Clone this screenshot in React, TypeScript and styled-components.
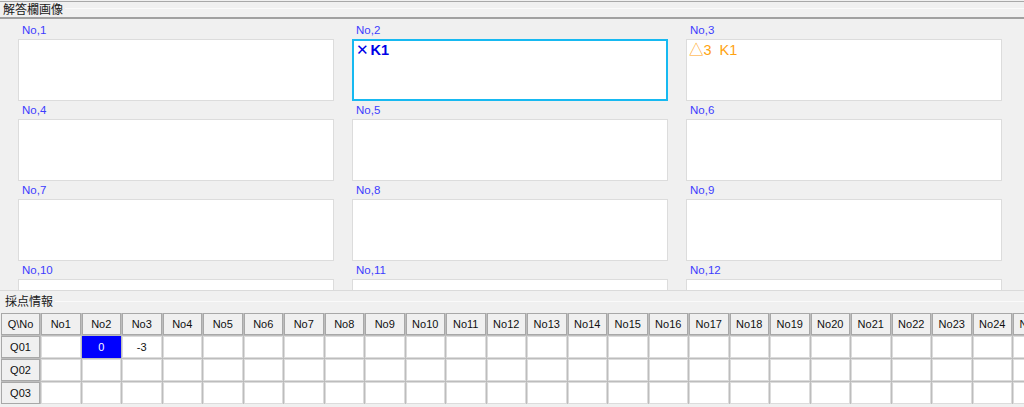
import { createGlobalStyle } from "styled-components";
import styled from "styled-components";

const GlobalStyle = createGlobalStyle`
  html, body {
    margin: 0;
    padding: 0;
    background: #f0f0f0;
    overflow: hidden;
  }
  * {
    box-sizing: border-box;
  }
`;

const Window = styled.div`
  width: 1024px;
  height: 407px;
  display: flex;
  flex-direction: column;
  background: #f0f0f0;
  font-family: "Liberation Sans", "Noto Sans CJK JP", sans-serif;
  overflow: hidden;
`;

const HeaderBar = styled.div`
  margin-top: 1px;
  height: 18px;
  border-top: 1px solid #a8a8a8;
  border-bottom: 2px solid #a0a0a0;
  display: flex;
  align-items: flex-start;
  padding-left: 3px;
`;

const GroupTitle = styled.span`
  font-family: "Noto Sans CJK JP", sans-serif;
  font-size: 12px;
  line-height: 14px;
  color: #1a1a1a;
  white-space: nowrap;
`;

const EtchLine = styled.div<{ $top: number }>`
  flex: 1;
  margin-top: ${(p) => p.$top}px;
  margin-left: 2px;
  border-top: 1px solid #fafafa;
`;

const ImagePanel = styled.div`
  height: 271px;
  overflow: hidden;
  padding: 3px 0 0 18px;
  display: grid;
  grid-template-columns: repeat(3, 316px);
  column-gap: 18px;
  grid-auto-rows: 80px;
  align-content: start;
`;

const AnswerItem = styled.div`
  display: flex;
  flex-direction: column;
`;

const AnswerLabel = styled.div`
  height: 17px;
  padding-left: 4px;
  padding-top: 2px;
  font-size: 11.5px;
  line-height: 13px;
  color: #3c3cff;
`;

const AnswerBox = styled.div<{ $selected?: boolean }>`
  height: 62px;
  background: #ffffff;
  border: ${(p) => (p.$selected ? "2px solid #17b9f1" : "1px solid #dcdcdc")};
  padding: ${(p) => (p.$selected ? "1px 0 0 2px" : "2px 0 0 2px")};
  font-size: 14.5px;
  line-height: 16px;
  white-space: pre;
`;

const Mark = styled.span<{ $tone: "wrong" | "partial" }>`
  color: ${(p) => (p.$tone === "wrong" ? "#0000e6" : "#ffa30f")};
  font-weight: ${(p) => (p.$tone === "wrong" ? 600 : 400)};
`;

const Cross = styled.span`
  font-family: "DejaVu Sans", sans-serif;
  font-size: 15px;
  font-weight: 400;
  margin-right: 2px;
`;

const ScoreHeader = styled.div`
  height: 23px;
  border-top: 1px solid #dadada;
  display: flex;
  align-items: flex-start;
  padding: 3px 0 0 5px;
`;

const ScoreGrid = styled.div`
  margin-left: 1px;
  display: grid;
  grid-template-columns: 39px repeat(26, 39.5px);
  grid-auto-rows: 22px;
  gap: 1px;
  background: #bdbdbd;
  width: max-content;
`;

const Cell = styled.div<{ $head?: boolean; $active?: boolean }>`
  display: flex;
  align-items: center;
  justify-content: center;
  font-size: 11px;
  color: ${(p) => (p.$active ? "#ffffff" : "#111")};
  background: ${(p) => (p.$active ? "#0000ff" : p.$head ? "#f0f0f0" : "#ffffff")};
  border: 1px solid
    ${(p) => (p.$active ? "#0000ff" : p.$head ? "#a8a8a8" : "#dcdcdc")};
`;

const answers = Array.from({ length: 12 }, (_, i) => i + 1);
const cols = Array.from({ length: 26 }, (_, i) => `No${i + 1}`);
const rows = ["Q01", "Q02", "Q03"];

const scores: Record<string, Record<string, string>> = {
  Q01: { No2: "0", No3: "-3" },
};

const App = () => {
  const renderBoxContent = (n: number) => {
    if (n === 2)
      return (
        <Mark $tone="wrong">
          <Cross>✕</Cross>K1
        </Mark>
      );
    if (n === 3) return <Mark $tone="partial">{"△3  K1"}</Mark>;
    return null;
  };

  return (
    <Window>
      <GlobalStyle />
      <HeaderBar>
        <GroupTitle>解答欄画像</GroupTitle>
        <EtchLine $top={6} />
      </HeaderBar>
      <ImagePanel>
        {answers.map((n) => (
          <AnswerItem key={n}>
            <AnswerLabel>No,{n}</AnswerLabel>
            <AnswerBox $selected={n === 2}>{renderBoxContent(n)}</AnswerBox>
          </AnswerItem>
        ))}
      </ImagePanel>
      <ScoreHeader>
        <GroupTitle>採点情報</GroupTitle>
        <EtchLine $top={7} />
      </ScoreHeader>
      <ScoreGrid>
        <Cell $head>Q\No</Cell>
        {cols.map((c) => (
          <Cell $head key={c}>
            {c}
          </Cell>
        ))}
        {rows.map((r) => (
          <>
            <Cell $head key={r}>
              {r}
            </Cell>
            {cols.map((c) => (
              <Cell key={r + c} $active={r === "Q01" && c === "No2"}>
                {scores[r]?.[c] ?? ""}
              </Cell>
            ))}
          </>
        ))}
      </ScoreGrid>
    </Window>
  );
};

export default App;
